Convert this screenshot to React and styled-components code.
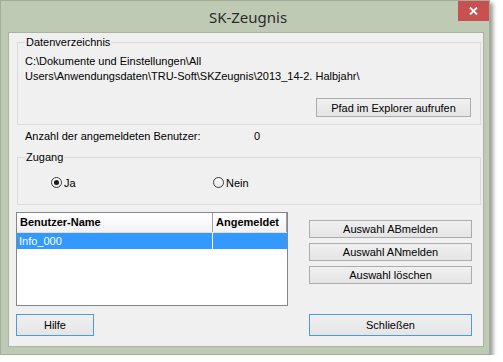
import React from "react";
import styled, { createGlobalStyle } from "styled-components";

const GlobalStyle = createGlobalStyle`
  html, body {
    margin: 0;
    background: #ffffff;
  }
  body {
    font-family: "Liberation Sans", Arial, sans-serif;
    font-size: 11px;
    color: #000;
  }
`;

const Window = styled.div`
  width: 490px;
  height: 355px;
  box-sizing: border-box;
  background: #bfcab5;
  border: 1px solid #a3ad9a;
  box-shadow: 3px 3px 4px rgba(0, 0, 0, 0.4);
  display: flex;
  flex-direction: column;
  position: relative;
`;

const TitleBar = styled.div`
  height: 31px;
  display: flex;
  align-items: center;
  justify-content: center;
  font-family: "Noto Sans", "Open Sans", sans-serif;
  font-size: 15px;
  color: #2b2b2b;
  padding-left: 6px;
`;

const CloseButton = styled.div`
  position: absolute;
  top: 0;
  right: 0;
  width: 31px;
  height: 20px;
  background: #c75050;
  display: flex;
  align-items: center;
  justify-content: center;
`;

const Client = styled.div`
  box-sizing: border-box;
  width: 476px;
  height: 315px;
  margin-left: 7px;
  background: #f0f0f0;
  border: 1px solid #a9b4a0;
  display: flex;
  flex-direction: column;
`;

const Group = styled.fieldset`
  margin: ${(p) => p.$top}px 2px 0 8px;
  padding: ${(p) => p.$padTop}px 9px ${(p) => p.$padBottom}px 7px;
  border: 1px solid #dcdcdc;
  min-width: 0;
`;

const Legend = styled.legend`
  padding: 0 1px;
  line-height: 14px;
`;

const PathText = styled.div`
  line-height: 15px;
`;

const ButtonRow = styled.div`
  display: flex;
  justify-content: flex-end;
  margin-top: 14px;
`;

const Button = styled.button`
  box-sizing: border-box;
  width: ${(p) => p.$w}px;
  height: ${(p) => p.$h || 18}px;
  padding: 0;
  font-family: "Liberation Sans", Arial, sans-serif;
  font-size: 11px;
  color: #000;
  background: linear-gradient(#f0f0f0, #e5e5e5);
  border: 1px solid ${(p) => (p.$focus ? "#4a9be0" : "#acacac")};
  border-radius: 0;
`;

const CountRow = styled.div`
  display: grid;
  grid-template-columns: 229px auto;
  margin: 4px 0 0 16px;
  line-height: 15px;
`;

const RadioRow = styled.div`
  display: grid;
  grid-template-columns: 162px auto;
  margin-left: 26px;
  height: 15px;
`;

const RadioItem = styled.label`
  display: flex;
  align-items: center;
  gap: 2px;
`;

const RadioCircle = styled.span`
  box-sizing: border-box;
  width: 11px;
  height: 11px;
  border-radius: 50%;
  border: 1px solid #3a3a3a;
  background: linear-gradient(#ffffff, #e8e8e8);
  display: flex;
  align-items: center;
  justify-content: center;
  &::after {
    content: "";
    width: 5px;
    height: 5px;
    border-radius: 50%;
    background: ${(p) => (p.$checked ? "#1a1a1a" : "transparent")};
  }
`;

const BottomSection = styled.div`
  display: grid;
  grid-template-columns: 272px 163px;
  column-gap: 21px;
  margin: 7px 0 0 7px;
`;

const ListView = styled.div`
  box-sizing: border-box;
  height: 94px;
  border: 1px solid #828790;
  background: #ffffff;
`;

const Row = styled.div`
  display: grid;
  grid-template-columns: 196px 1fr;
  height: ${(p) => (p.$header ? 19 : 16)}px;
  line-height: ${(p) => (p.$header ? 19 : 16)}px;
  background: ${(p) =>
    p.$header
      ? "linear-gradient(#ffffff, #f2f2f2)"
      : p.$selected
      ? "#3399ff"
      : "transparent"};
  border-bottom: ${(p) => (p.$header ? "1px solid #e0e0e0" : "0")};
  color: ${(p) => (p.$selected ? "#ffffff" : "#000")};
  font-weight: ${(p) => (p.$header ? "bold" : "normal")};
`;

const Cell = styled.div`
  padding-left: ${(p) => (p.$header ? 3 : 2)}px;
  border-right: 1px solid
    ${(p) => (p.$header ? "#a0a0a0" : p.$selected ? "#ffffff" : "transparent")};
  white-space: nowrap;
  overflow: hidden;
`;

const SideButtons = styled.div`
  display: flex;
  flex-direction: column;
  gap: 5px;
  padding-top: 8px;
`;

const Footer = styled.div`
  display: flex;
  justify-content: space-between;
  margin-top: 8px;
  padding: 0 11px 0 7px;
`;

const CloseIcon = () => (
  <svg width="9" height="8" viewBox="0 0 9 8">
    <path d="M1 0.5 L8 7.5 M8 0.5 L1 7.5" stroke="#fff" strokeWidth="1.8" />
  </svg>
);

export default function App() {
  return (
    <>
      <GlobalStyle />
      <Window>
        <TitleBar>SK-Zeugnis</TitleBar>
        <CloseButton>
          <CloseIcon />
        </CloseButton>
        <Client>
          <Group $top={2} $padTop={5} $padBottom={7}>
            <Legend>Datenverzeichnis</Legend>
            <PathText>
              C:\Dokumente und Einstellungen\All
              <br />
              Users\Anwendungsdaten\TRU-Soft\SKZeugnis\2013_14-2. Halbjahr\
            </PathText>
            <ButtonRow>
              <Button $w={155} $h={19}>Pfad im Explorer aufrufen</Button>
            </ButtonRow>
          </Group>

          <CountRow>
            <span>Anzahl der angemeldeten Benutzer:</span>
            <span>0</span>
          </CountRow>

          <Group $top={6} $padTop={11} $padBottom={14}>
            <Legend>Zugang</Legend>
            <RadioRow>
              <RadioItem>
                <RadioCircle $checked />
                Ja
              </RadioItem>
              <RadioItem>
                <RadioCircle />
                Nein
              </RadioItem>
            </RadioRow>
          </Group>

          <BottomSection>
            <ListView>
              <Row $header>
                <Cell $header>Benutzer-Name</Cell>
                <Cell $header>Angemeldet</Cell>
              </Row>
              <Row $selected>
                <Cell $selected>Info_000</Cell>
                <Cell />
              </Row>
            </ListView>
            <SideButtons>
              <Button $w={163}>Auswahl ABmelden</Button>
              <Button $w={163}>Auswahl ANmelden</Button>
              <Button $w={163}>Auswahl löschen</Button>
            </SideButtons>
          </BottomSection>

          <Footer>
            <Button $w={78} $h={22} $focus>
              Hilfe
            </Button>
            <Button $w={163} $h={22} $focus>
              Schließen
            </Button>
          </Footer>
        </Client>
      </Window>
    </>
  );
}
